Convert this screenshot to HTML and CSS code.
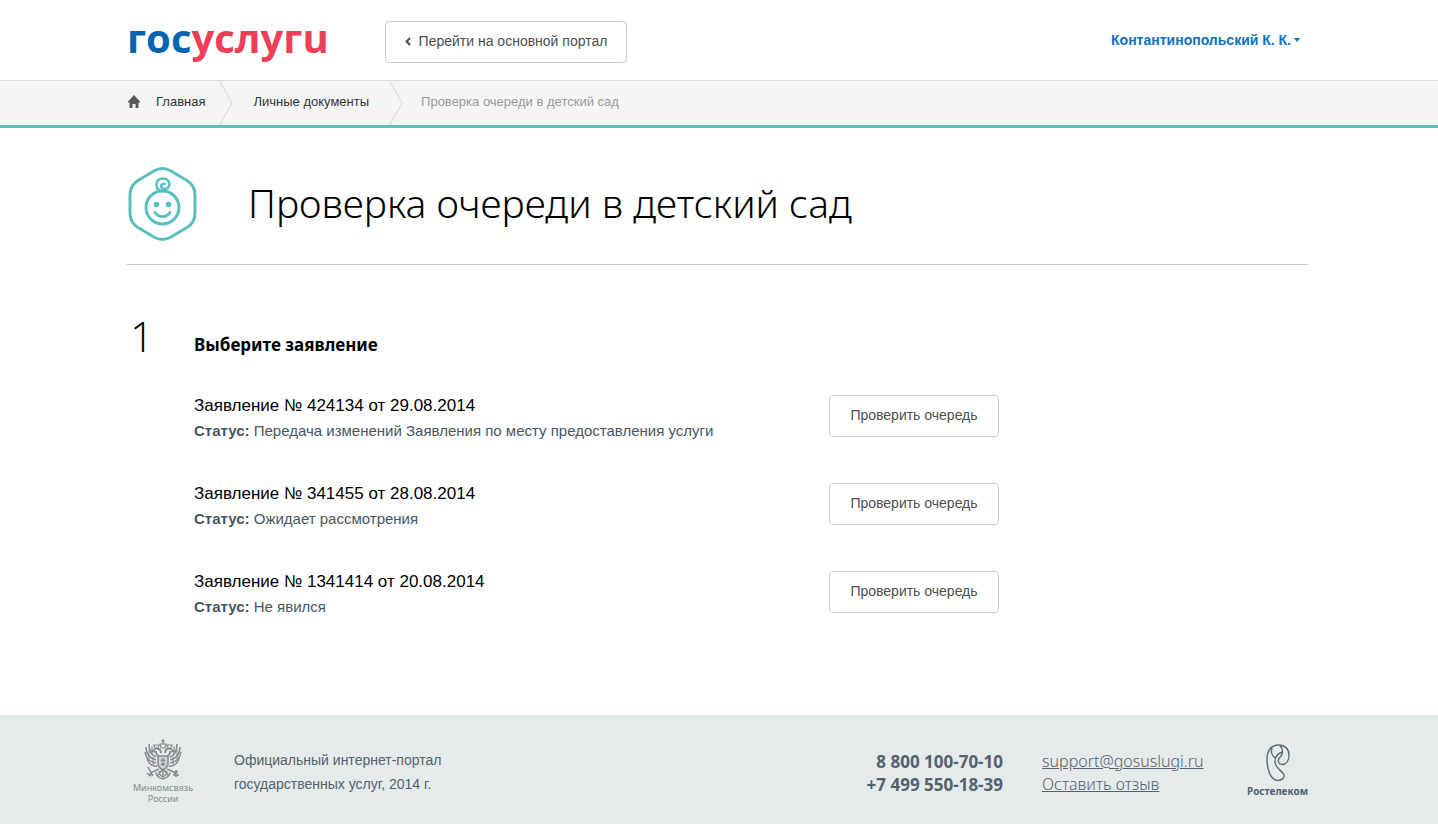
FILE: index.html
```html
<!DOCTYPE html>
<html lang="ru">
<head>
<meta charset="utf-8">
<meta name="viewport" content="width=device-width, initial-scale=1">
<title>Проверка очереди в детский сад</title>
<link rel="stylesheet" href="styles.css">
</head>
<body>
<header class="header wrap">
  <a class="logo" href="#"><span class="logo-blue">гос</span>услугu</a>
  <button class="btn btn-portal" type="button">
    <svg width="6" height="9" viewBox="0 0 6 9" aria-hidden="true"><path d="M5 1 1.6 4.5 5 8" fill="none" stroke="#4d4d4d" stroke-width="2"/></svg>
    Перейти на основной портал
  </button>
  <button class="user" type="button">Контантинопольский К. К.
    <svg width="6" height="4" viewBox="0 0 6 4" aria-hidden="true"><path d="M0 0h6L3 4z" fill="#0b72c0"/></svg>
  </button>
</header>
<nav class="crumbs wrap" aria-label="Навигация">
  <a class="crumb crumb-home" href="#">
    <svg width="12" height="13" viewBox="0 0 12 13" aria-hidden="true"><path d="M6 0 12 6.5V7.500H10.500V13H7.500V9H4.500V13H1.500V7.500H0V6.500Z" fill="#5a5a5a"/></svg>
    Главная
  </a>
  <svg class="sep" width="14" height="44" viewBox="0 0 14 44" aria-hidden="true"><path d="M.5 0 13 22 .5 44" fill="none" stroke="#dcdcdc" stroke-width="1.200"/></svg>
  <a class="crumb" href="#">Личные документы</a>
  <svg class="sep sep-last" width="14" height="44" viewBox="0 0 14 44" aria-hidden="true"><path d="M.5 0 13 22 .5 44" fill="none" stroke="#dcdcdc" stroke-width="1.200"/></svg>
  <span class="crumb crumb-current">Проверка очереди в детский сад</span>
</nav>
<main class="main wrap">
  <div class="title-row">
    <svg class="baby" width="70" height="76" viewBox="0 0 70 76" fill="none" stroke="#57bfc0" stroke-linecap="round" aria-hidden="true">
      <path d="M27 5Q35.500 0 44 5L60 14.500Q68 19.500 68 29V47Q68 56.500 60 61.500L44 71Q35.500 76 27 71L11 61.500Q3 56.500 3 47V29Q3 19.500 11 14.500Z" stroke-width="3"/>
      <circle cx="35.500" cy="41.500" r="16.500" stroke-width="3"/>
      <path d="M33.500 25C27.500 22 28 12.500 36 12.500C44 12.500 44.500 23 37.500 23C33 23 33 17 37.500 18" stroke-width="2.500"/>
      <path d="M28 46.500C31.500 52 39.500 52 43 46.500" stroke-width="2.800"/>
      <circle cx="29.500" cy="38.500" r="2.800" fill="#57bfc0" stroke="none"/>
      <circle cx="41.500" cy="38.500" r="2.800" fill="#57bfc0" stroke="none"/>
    </svg>
    <h1 class="title">Проверка очереди в детский сад</h1>
  </div>
  <section class="step">
    <div class="step-num">1</div>
    <div class="step-body">
      <h2 class="step-title">Выберите заявление</h2>
      <div class="item">
        <div class="item-text">
          <h3 class="item-name">Заявление № 424134 от 29.08.2014</h3>
          <p class="item-status"><b>Статус:</b> Передача изменений Заявления по месту предоставления услуги</p>
        </div>
        <button class="btn" type="button">Проверить очередь</button>
      </div>
      <div class="item">
        <div class="item-text">
          <h3 class="item-name">Заявление № 341455 от 28.08.2014</h3>
          <p class="item-status"><b>Статус:</b> Ожидает рассмотрения</p>
        </div>
        <button class="btn" type="button">Проверить очередь</button>
      </div>
      <div class="item">
        <div class="item-text">
          <h3 class="item-name">Заявление № 1341414 от 20.08.2014</h3>
          <p class="item-status"><b>Статус:</b> Не явился</p>
        </div>
        <button class="btn" type="button">Проверить очередь</button>
      </div>
    </div>
  </section>
</main>
<footer class="footer wrap">
  <div class="ministry">
    <svg width="38" height="42" viewBox="0 0 38 42" fill="none" stroke="#858c8d" aria-hidden="true">
      <path d="M19 0v5M17 2h4M16 5h6l-1 4h-4zM10 6h5l-1 3h-3zM23 6h5l-1 3h-3z" stroke-width="1.200"/>
      <path d="M17 14C17 10 14 9 11 10L8 12l4 1c0 3 2 4 4 5M21 14c0-4 3-5 6-4l3 2-4 1c0 3-2 4-4 5" stroke-width="1.800"/>
      <path d="M12 18C7 16 5 11 5 5M12 21C5 19 2 14 2 8M12 24C5 23 2 19 1 13M13 27C8 28 4 24 3 19M26 18c5-2 7-7 7-13M26 21c7-2 10-7 10-13M26 24c7-1 10-5 11-11M25 27c5 1 9-3 10-8" stroke-width="1.500"/>
      <path d="M8 7v9M5 11v9M30 7v9M33 11v9M9 18v8M29 18v8" stroke-width="1"/>
      <path d="M14 17h10v9q-1 3-5 5-4-2-5-5z" fill="#cdd3d3" stroke-width="1.500"/>
      <path d="M19 19v8M17 22l2-2 2 2M17 26l2-2 2 2" stroke-width="1.200"/>
      <path d="M15 30 8 33 5 37M4 28l5 9M3 34l4 3M23 30l7 3 2 4M32 31v7M29 36h6M30 33h4" stroke-width="1.500"/>
      <path d="M18 31l-5 6M20 31l5 6M19 31v10M12 33q0 5 7 7 7-2 7-7M15 32q0 4 4 6 4-2 4-6" stroke-width="1.300"/>
    </svg>
    <span class="ministry-name">Минкомсвязь<br>России</span>
  </div>
  <p class="about">Официальный интернет-портал<br>государственных услуг, 2014 г.</p>
  <p class="phones">8 800 100-70-10<br>+7 499 550-18-39</p>
  <p class="links"><a href="#">support@gosuslugi.ru</a><br><a href="#">Оставить отзыв</a></p>
  <div class="rostelecom">
    <svg width="24" height="38" viewBox="0 0 24 38" fill="none" stroke="#5b6a78" stroke-width="1.400" aria-hidden="true">
      <path d="M12.500 1C19 1 23 5 23 11C23 17 20 20.500 16 20.500C12.500 20.500 11.500 17 13 14.500C14.500 12.500 16.500 11.500 16.500 8C16.500 5 15.500 3 13.500 1"/>
      <path d="M12.500 1C5 1 1 7 1 15C1 24 4 36.500 12 36.500C16 36.500 18.500 34 18 31C17 27 9.500 25 9 18C8.800 13 12 9 16.500 8"/>
      <path d="M6 3.500C4.500 8 6 12.500 9.800 14"/>
    </svg>
    <span class="rostelecom-name">Ростелеком</span>
  </div>
</footer>
</body>
</html>
```
FILE: styles.css
```css
* { box-sizing: border-box; }

body {
  margin: 0;
  min-height: 100vh;
  display: flex;
  flex-direction: column;
  background: #fff;
  color: #000;
  font-family: "Liberation Sans", Arial, sans-serif;
  font-size: 15px;
}

h1, h2, h3, p { margin: 0; font-weight: normal; }
a { color: inherit; text-decoration: none; }
button { font: inherit; cursor: pointer; }
svg { flex: none; }

.wrap { padding-left: 127px; padding-right: 130px; }

.header {
  display: flex;
  align-items: center;
  height: 80px;
}

.logo {
  flex: 0 0 258px;
  padding-bottom: 5px;
  color: #ee3f58;
  font: bold 40px/48px "Open Sans", "Noto Sans", sans-serif;
}
.logo-blue { color: #0065b1; }

.btn {
  display: flex;
  align-items: center;
  justify-content: center;
  width: 170px;
  height: 42px;
  padding: 0 0 2px;
  border: 1px solid #c9cdd1;
  border-radius: 4px;
  background: #fff;
  color: #4d4d4d;
  font-size: 14px;
  white-space: nowrap;
}
.btn-portal { width: 242px; gap: 8px; margin-top: 4px; }

.user {
  display: flex;
  align-items: center;
  gap: 3px;
  margin-left: auto;
  margin-right: 8px;
  padding: 0;
  border: 0;
  background: none;
  color: #0b72c0;
  font-size: 14px;
  font-weight: bold;
}

.crumbs {
  display: flex;
  align-items: center;
  height: 48px;
  border-top: 1px solid #dcdcdc;
  border-bottom: 3px solid #57c3c8;
  background: #f5f5f5;
  color: #333;
  font-size: 13px;
}
.crumb { padding-bottom: 3px; }
.crumb-home { display: flex; align-items: center; gap: 16px; padding-left: 1px; }
.crumb-current { color: #999; }
.sep { margin: 0 20px 0 14px; }
.sep-last { margin: 0 18px 0 20px; }

.title-row {
  display: flex;
  align-items: center;
  gap: 51px;
  height: 137px;
  border-bottom: 1px solid #c8c8c8;
}
.baby { margin-top: 16px; }
.title {
  padding-top: 14px;
  font: 300 39px/56px "Noto Sans", "Open Sans", sans-serif;
}

.step { display: flex; padding-top: 43px; }
.step-num {
  flex: 0 0 67px;
  padding-left: 3px;
  font: 300 42px/56px "Open Sans", sans-serif;
}
.step-body { flex: 1; }
.step-title {
  padding-top: 24px;
  margin-bottom: 37px;
  font: bold 17px/26px "Noto Sans", sans-serif;
}
.item { display: flex; height: 88px; align-items: flex-start; }
.item-text { flex: 0 0 635px; }
.item-name { font-size: 17px; line-height: 22px; }
.item-status { margin-top: 3px; color: #4a5560; line-height: 22px; }

.footer {
  display: flex;
  align-items: flex-start;
  height: 109px;
  margin-top: auto;
  background: #e5ebeb;
  color: #54616e;
}
.ministry {
  display: flex;
  flex-direction: column;
  align-items: center;
  width: 72px;
  padding-top: 24px;
}
.ministry-name {
  margin-top: 1px;
  color: #858c8d;
  font: 9px/11px "Noto Sans", sans-serif;
  text-align: center;
}
.about { margin-left: 35px; padding-top: 33px; font-size: 14px; line-height: 24px; }
.phones {
  margin-left: auto;
  padding-top: 35px;
  font: bold 17px/23px "Noto Sans", sans-serif;
  text-align: right;
}
.links {
  width: 154px;
  margin-left: 39px;
  padding-top: 35px;
  font: 300 16px/23px "Noto Sans", sans-serif;
  white-space: nowrap;
}
.links a { text-decoration: underline; }
.rostelecom {
  display: flex;
  flex-direction: column;
  align-items: center;
  margin-left: 51px;
  padding-top: 29px;
}
.rostelecom-name { margin-top: 2px; font: bold 10px/14px "Noto Sans", sans-serif; }
```
